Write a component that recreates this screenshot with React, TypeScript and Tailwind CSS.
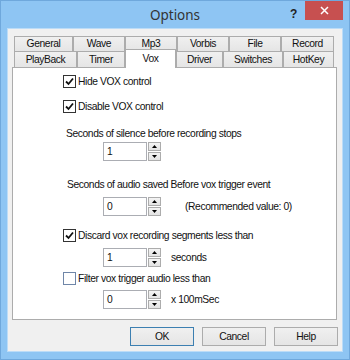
import React from 'react';

const font = "font-['Liberation_Sans',Arial,sans-serif]";

const Check = ({ checked }: { checked: boolean }) => (
  <span
    className={`w-[13px] h-[13px] shrink-0 bg-white border flex items-center justify-center ${
      checked ? 'border-[#333333]' : 'border-[#6f86a8]'
    }`}
  >
    {checked && (
      <svg width="11" height="11" viewBox="0 0 11 11">
        <path d="M2 5.5 L4.5 8 L9 2.5" fill="none" stroke="#111" strokeWidth="1.8" />
      </svg>
    )}
  </span>
);

const CheckRow = ({ label, checked, mt }: { label: string; checked: boolean; mt: string }) => (
  <div className={`flex items-center h-[13px] pl-[50px] gap-[2px] ${mt}`}>
    <Check checked={checked} />
    <span className="leading-[13px]">{label}</span>
  </div>
);

const Spin = ({ value }: { value: string }) => (
  <div className="flex gap-[1px] h-[19px]">
    <div className="w-[44px] h-full bg-white border border-[#abadb3] flex items-center pl-[3px]">
      {value}
    </div>
    <div className="w-[13px] h-full flex flex-col gap-[1px]">
      <div className="flex-1 border border-[#acacac] bg-gradient-to-b from-[#f4f4f4] to-[#e3e3e3] flex items-center justify-center">
        <svg width="5" height="3" viewBox="0 0 5 3">
          <path d="M0 3 L2.5 0 L5 3 Z" fill="#000" />
        </svg>
      </div>
      <div className="flex-1 border border-[#acacac] bg-gradient-to-b from-[#f4f4f4] to-[#e3e3e3] flex items-center justify-center">
        <svg width="5" height="3" viewBox="0 0 5 3">
          <path d="M0 0 L2.5 3 L5 0 Z" fill="#000" />
        </svg>
      </div>
    </div>
  </div>
);

const Tab = ({ label, w, active }: { label: string; w: string; active?: boolean }) => (
  <div
    className={`${w} border-t border-x border-[#acacac] flex items-center justify-center ${
      active
        ? 'h-[19px] bg-white relative top-[1px] z-10 items-start pt-[1px]'
        : 'h-full bg-gradient-to-b from-[#f0f0f0] to-[#e5e5e5]'
    }`}
  >
    {label}
  </div>
);

const Button = ({ label, focused }: { label: string; focused?: boolean }) => (
  <div
    className={`w-[64px] h-[19px] flex items-center justify-center border bg-gradient-to-b from-[#f0f0f0] to-[#e5e5e5] ${
      focused ? 'border-[#3c7fb1]' : 'border-[#acacac]'
    }`}
  >
    {label}
  </div>
);

export default function App() {
  return (
    <div
      className={`w-[350px] h-[360px] bg-[#8ec5f3] border border-[#6fa8dc] flex flex-col ${font} text-[10.3px] tracking-[-0.4px] text-[#111]`}
    >
      {/* Title bar */}
      <div className="h-[27px] grid grid-cols-[1fr_auto_1fr]">
        <div />
        <div className="pt-[4px] font-['Noto_Sans',sans-serif] text-[13.5px] tracking-normal text-[#333333]">
          Options
        </div>
        <div className="flex justify-end items-start pr-[6px]">
          <span className="mt-[4px] mr-[8px] font-bold text-[12px] text-[#222]">?</span>
          <div className="w-[38px] h-[19px] bg-[#c75050] flex items-center justify-center">
            <svg width="9" height="9" viewBox="0 0 9 9">
              <path d="M1 1 L8 8 M8 1 L1 8" stroke="#fff" strokeWidth="1.5" />
            </svg>
          </div>
        </div>
      </div>

      {/* Body */}
      <div className="flex-1 mx-[6px] mb-[7px] bg-[#f0f0f0] border border-[#bcdcf7] pl-[4px] pt-[7px]">
        <div className="w-[325px]">
          <div className="pl-[2px] flex flex-col">
            <div className="flex h-[15px]">
              <Tab label="General" w="w-[59px]" />
              <Tab label="Wave" w="w-[52px]" />
              <Tab label="Mp3" w="w-[52px]" />
              <Tab label="Vorbis" w="w-[52px]" />
              <Tab label="File" w="w-[52px]" />
              <Tab label="Record" w="w-[53px]" />
            </div>
            <div className="flex h-[16px] items-end">
              <Tab label="PlayBack" w="w-[63px]" />
              <Tab label="Timer" w="w-[48px]" />
              <Tab label="Vox" w="w-[51px]" active />
              <Tab label="Driver" w="w-[47px]" />
              <Tab label="Switches" w="w-[60px]" />
              <Tab label="HotKey" w="w-[51px]" />
            </div>
          </div>

          {/* Panel */}
          <div className="h-[253px] bg-white border border-[#acacac] flex flex-col">
            <CheckRow label="Hide VOX control" checked mt="mt-[7px]" />
            <CheckRow label="Disable VOX control" checked mt="mt-[12px]" />
            <div className="mt-[14px] h-[13px] leading-[13px] pl-[53px]">
              Seconds of silence before recording stops
            </div>
            <div className="mt-[2px] pl-[90px]">
              <Spin value="1" />
            </div>
            <div className="mt-[17px] h-[13px] leading-[13px] pl-[54px]">
              Seconds of audio saved Before vox trigger event
            </div>
            <div className="mt-[6px] pl-[90px] flex items-center gap-[24px]">
              <Spin value="0" />
              <span>(Recommended value: 0)</span>
            </div>
            <CheckRow label="Discard vox recording segments less than" checked mt="mt-[13px]" />
            <div className="mt-[6px] pl-[90px] flex items-center gap-[10px]">
              <Spin value="1" />
              <span>seconds</span>
            </div>
            <CheckRow label="Filter vox trigger audio less than" checked={false} mt="mt-[5px]" />
            <div className="mt-[5px] pl-[90px] flex items-center gap-[10px]">
              <Spin value="0" />
              <span>x 100mSec</span>
            </div>
          </div>

          {/* Buttons */}
          <div className="mt-[7px] flex justify-end gap-[8px] -mr-[1px]">
            <Button label="OK" focused />
            <Button label="Cancel" />
            <Button label="Help" />
          </div>
        </div>
      </div>
    </div>
  );
}
